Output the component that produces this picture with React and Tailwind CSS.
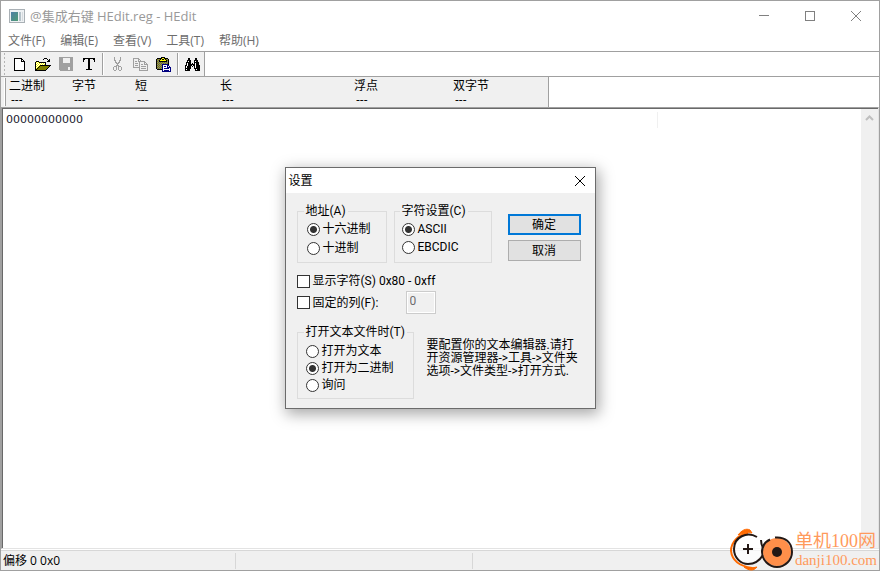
import { useState } from "react";

const COLORS = {
  "#": "#000000",
  G: "#a0a0a0",
  W: "#ffffff",
  Y: "#ffff00",
  O: "#808000",
  g: "#808080",
  B: "#000080",
};

// Toolbar bitmaps, one character per pixel
const ICONS = {
  new: [
    "########...",
    "#WWWWWW##..",
    "#WWWWWW#W#.",
    "#WWWWWW####",
    "#WWWWWWWWW#",
    "#WWWWWWWWW#",
    "#WWWWWWWWW#",
    "#WWWWWWWWW#",
    "#WWWWWWWWW#",
    "#WWWWWWWWW#",
    "#WWWWWWWWW#",
    "#WWWWWWWWW#",
    "###########",
  ],
  open: [
    ".........###....",
    "........#...#.#.",
    ".............##.",
    ".###........###.",
    "#YWY#######.....",
    "#WYWYWYWYW#.....",
    "#YWYWYWYWY#.....",
    "#WYWY###########",
    "#YWY#OOOOOOOOO#.",
    "#WY#OOOOOOOOO#..",
    "#Y#OOOOOOOOO#...",
    "##OOOOOOOOO#....",
    "###########.....",
  ],
  save: [
    "GGGGGGGGGGGGGG",
    "GGGG.......GGG",
    "GGGG.......GGG",
    "GGGG.......GGG",
    "GGGG.......GGG",
    "GGGG.......GGG",
    "GGGGGGGGGGGGGG",
    "GGGGGGGGGGGGGG",
    "GGGGGGGGGGGGGG",
    "GGGGGGGGGGGGGG",
    "GGGGGGGGG..GGG",
    "GGGGGGGGG..GGG",
    "GGGGGGGGG..GGG",
    ".GGGGGGGGGGGGG",
  ],
  text: [
    "############",
    "##...##...##",
    "#....##....#",
    "#....##....#",
    ".....##.....",
    ".....##.....",
    ".....##.....",
    ".....##.....",
    ".....##.....",
    ".....##.....",
    ".....##.....",
    "...######...",
  ],
  cut: [
    "..G.....G..",
    "..G.....G..",
    "..G.....G..",
    "..GG...GG..",
    "...G...G...",
    "...GG.GG...",
    "....GGG....",
    ".....G.....",
    "....GGG....",
    "..GGG.GGG..",
    ".G..G.G..G.",
    ".G..G.G..G.",
    ".G..G.G..G.",
    "..GG...GG..",
  ],
  copy: [
    "GGGGGG.........",
    "G....GG........",
    "G....G.G.......",
    "G.GG.GGGGGGG...",
    "G.....G....GG..",
    "G.GGG.G....G.G.",
    "G.....G.GG.GGGG",
    "G.GGG.G.......G",
    "G.....G.GGGGG.G",
    "GGGGGGG.......G",
    "......G.GGGGG.G",
    "......G.......G",
    "......GGGGGGGGG",
  ],
  paste: [
    ".....####......",
    ".#####YY####...",
    "#OgO#Y##Y#Og#..",
    "#gO#YYYYYY#O#..",
    "#Og########g#..",
    "#gOgOgOgOgOg#..",
    "#OgOgOgOgOgO#..",
    "#gOgOgBBBBBB#..",
    "#OgOgOBWWWWBB..",
    "#gOgOgBWBBWBWB.",
    "#OgOgOBWWWWBBBB",
    "#gOgOgBWBBBBBWB",
    ".#####BWWWWWWWB",
    "......BWBBBBBWB",
    "......BBBBBBBBB",
  ],
  find: [
    "...##.....##...",
    "...##.....##...",
    "..####...####..",
    "..#W##...#W##..",
    ".#####...#####.",
    ".#W###.#.#W###.",
    ".#W#######W###.",
    "##W####.##W####",
    "#W####.#.#W####",
    "#W####...#W####",
    "######...######",
    "#W###.....#W###",
    "#####.....#####",
  ],
};

const MENUS = ["文件(F)", "编辑(E)", "查看(V)", "工具(T)", "帮助(H)"];

const VALUES = [
  { label: "二进制", width: "w-[63px]" },
  { label: "字节", width: "w-[63px]" },
  { label: "短", width: "w-[85px]" },
  { label: "长", width: "w-[134px]" },
  { label: "浮点", width: "w-[99px]" },
  { label: "双字节", width: "w-[95px]" },
];

function PixelIcon({ rows }) {
  const w = rows[0].length;
  const h = rows.length;
  return (
    <svg width={w} height={h} viewBox={`0 0 ${w} ${h}`} shapeRendering="crispEdges" aria-hidden="true">
      {rows.flatMap((row, y) =>
        [...row].map((c, x) =>
          COLORS[c] ? <rect key={`${x}-${y}`} x={x} y={y} width="1" height="1" fill={COLORS[c]} /> : null
        )
      )}
    </svg>
  );
}

function ToolButton({ icon, label, disabled }) {
  return (
    <button type="button" aria-label={label} disabled={disabled} className="flex h-6 w-[23px] items-center justify-center">
      <PixelIcon rows={ICONS[icon]} />
    </button>
  );
}

function Separator() {
  return <span className="mx-[2px] my-px w-[2px] border-l border-[#a0a0a0] bg-white" />;
}

function TitleBar() {
  return (
    <header className="flex h-[29px] items-center justify-between pl-2">
      <div className="flex items-center gap-[5px]">
        <svg width="16" height="14" viewBox="0 0 16 14" aria-hidden="true">
          <defs>
            <linearGradient id="pane" x1="0" y1="0" x2="1" y2="1">
              <stop offset="0" stopColor="#4f7fa6" />
              <stop offset="1" stopColor="#4f9c74" />
            </linearGradient>
          </defs>
          <rect x="0.5" y="0.5" width="15" height="13" fill="#eef1f3" stroke="#a9b0b5" />
          <rect x="2" y="3" width="7" height="9" fill="url(#pane)" />
          <rect x="10" y="3" width="2" height="9" fill="#b5c2c9" />
          <rect x="13" y="3" width="1" height="9" fill="#d5dade" />
        </svg>
        <h1 className="text-[13px] leading-4 text-[#999999]">@集成右键 HEdit.reg - HEdit</h1>
      </div>
      <div className="flex text-[#808080]">
        <button type="button" aria-label="最小化" className="flex h-7 w-[46px] items-center justify-center">
          <svg width="10" height="10" viewBox="0 0 10 10" stroke="currentColor" shapeRendering="crispEdges">
            <path d="M0 4.500h10" />
          </svg>
        </button>
        <button type="button" aria-label="最大化" className="flex h-7 w-[46px] items-center justify-center">
          <svg width="10" height="10" viewBox="0 0 10 10" fill="none" stroke="currentColor">
            <rect x="0.5" y="0.5" width="9" height="9" />
          </svg>
        </button>
        <button type="button" aria-label="关闭" className="flex h-7 w-[46px] items-center justify-center">
          <svg width="10" height="10" viewBox="0 0 10 10" stroke="currentColor">
            <path d="M0 0l10 10M10 0L0 10" />
          </svg>
        </button>
      </div>
    </header>
  );
}

function Radio({ name, label, checked, onChange }) {
  return (
    <label className="flex items-center gap-[3px]">
      <input
        type="radio"
        name={name}
        checked={checked}
        onChange={onChange}
        className="size-[13px] shrink-0 appearance-none rounded-full border border-[#333333] bg-white checked:bg-[radial-gradient(circle,#333333_3px,#ffffff_4px)]"
      />
      {label}
    </label>
  );
}

function Checkbox({ label, checked, onChange }) {
  return (
    <label className="flex items-center gap-[3px]">
      <input
        type="checkbox"
        checked={checked}
        onChange={onChange}
        className="size-[13px] shrink-0 appearance-none border border-[#333333] bg-white checked:bg-[#333333]"
      />
      {label}
    </label>
  );
}

function SettingsDialog() {
  const [address, setAddress] = useState("hex");
  const [charset, setCharset] = useState("ascii");
  const [openAs, setOpenAs] = useState("binary");
  const [showChars, setShowChars] = useState(false);
  const [fixedCols, setFixedCols] = useState(false);

  return (
    <section
      role="dialog"
      aria-label="设置"
      className="w-[311px] border border-[#6b6b6b] bg-[#f0f0f0] font-['Roboto','Noto_Sans_CJK_SC',sans-serif] text-xs leading-4 text-black shadow-[2px_4px_14px_1px_rgba(0,0,0,0.35)]"
    >
      <div className="flex h-[25px] items-center justify-between bg-white pr-[10px] pl-[3px]">
        <h2>设置</h2>
        <button type="button" aria-label="关闭设置">
          <svg width="10" height="10" viewBox="0 0 10 10" stroke="#000000">
            <path d="M0 0l10 10M10 0L0 10" />
          </svg>
        </button>
      </div>

      <form className="px-[11px] pt-[10px] pb-[9px]" onSubmit={(e) => e.preventDefault()}>
        <div className="flex">
          <fieldset className="w-[90px] border border-[#dcdcdc] pb-[6px] pl-[9px]">
            <legend className="-ml-[3px] px-[2px]">地址(A)</legend>
            <div className="flex flex-col gap-[3px] pt-[2px]">
              <Radio name="address" label="十六进制" checked={address === "hex"} onChange={() => setAddress("hex")} />
              <Radio name="address" label="十进制" checked={address === "dec"} onChange={() => setAddress("dec")} />
            </div>
          </fieldset>
          <fieldset className="ml-[7px] w-[98px] border border-[#dcdcdc] pb-[6px] pl-[7px]">
            <legend className="-ml-[2px] px-[2px]">字符设置(C)</legend>
            <div className="flex flex-col gap-[2px] pt-[2px]">
              <Radio name="charset" label="ASCII" checked={charset === "ascii"} onChange={() => setCharset("ascii")} />
              <Radio name="charset" label="EBCDIC" checked={charset === "ebcdic"} onChange={() => setCharset("ebcdic")} />
            </div>
          </fieldset>
          <div className="ml-4 flex w-[73px] flex-col gap-[5px] pt-[11px]">
            <button type="submit" className="h-[21px] border-2 border-[#0078d7] bg-[#e1e1e1]">
              确定
            </button>
            <button type="button" className="h-[21px] border border-[#adadad] bg-[#e1e1e1]">
              取消
            </button>
          </div>
        </div>

        <div className="mt-[10px]">
          <Checkbox label="显示字符(S) 0x80 - 0xff" checked={showChars} onChange={(e) => setShowChars(e.target.checked)} />
        </div>
        <div className="mt-[2px] flex h-[23px] items-center">
          <div className="w-[109px]">
            <Checkbox label="固定的列(F):" checked={fixedCols} onChange={(e) => setFixedCols(e.target.checked)} />
          </div>
          <input
            type="text"
            aria-label="列数"
            defaultValue="0"
            disabled={!fixedCols}
            className="h-[23px] w-[30px] border border-[#cccccc] bg-[#f0f0f0] px-[3px] pb-[3px] text-[#6d6d6d] inset-ring inset-ring-white"
          />
        </div>

        <div className="mt-[10px] flex">
          <fieldset className="w-[117px] border border-[#dcdcdc] pb-[5px] pl-2">
            <legend className="-ml-[2px] px-[2px]">打开文本文件时(T)</legend>
            <div className="flex flex-col gap-px pt-[3px]">
              <Radio name="openAs" label="打开为文本" checked={openAs === "text"} onChange={() => setOpenAs("text")} />
              <Radio name="openAs" label="打开为二进制" checked={openAs === "binary"} onChange={() => setOpenAs("binary")} />
              <Radio name="openAs" label="询问" checked={openAs === "ask"} onChange={() => setOpenAs("ask")} />
            </div>
          </fieldset>
          <p className="ml-[13px] pt-[15px] leading-[13px] whitespace-nowrap">
            要配置你的文本编辑器.请打
            <br />
            开资源管理器-&gt;工具-&gt;文件夹
            <br />
            选项-&gt;文件类型-&gt;打开方式.
          </p>
        </div>
      </form>
    </section>
  );
}

function Watermark() {
  return (
    <div className="absolute right-[2px] -bottom-px flex items-center gap-[1px]">
      <svg width="64" height="43" viewBox="0 0 64 43" fill="none" aria-hidden="true">
        <path d="M18 5C8 7 1 14 1 23c1 9 8 15 21 17" stroke="#ff6a00" strokeWidth="2" />
        <path d="M8 7C12 2 16 0 20 2l2 3c-5-1-9 0-14 2zM14 39c5 4 10 4 13 0-4 1-8 1-13 0z" fill="#ff6a00" stroke="#ff6a00" />
        <circle cx="18" cy="21" r="14" fill="#ffffff" fillOpacity="0.7" />
        <path d="M27 9C17 3 4 9 4 21c0 9 7 15 14 15 7 0 12-4 15-9" stroke="#231815" strokeWidth="2" />
        <path d="M31 12c0 4 1 6 2 8" stroke="#231815" strokeWidth="2" />
        <path d="M18 16v10M13 21h10" stroke="#231815" strokeWidth="2" />
        <circle cx="47" cy="24" r="14" fill="#ff8f4a" />
        <path d="M45 9.500c10-1 17 5 17 14.500 0 8-7 15-15 15s-15-7-15-15c0-6 3-10 8-12.500" stroke="#231815" strokeWidth="2" />
        <circle cx="47" cy="24" r="5" fill="#231815" />
      </svg>
      <div className="font-['Liberation_Serif','Noto_Sans_CJK_SC',serif] text-[#ff9a5c]">
        <p className="text-[18px] leading-5">单机100网</p>
        <p className="text-[15px] leading-[18px]">danji100.com</p>
      </div>
    </div>
  );
}

export default function App() {
  return (
    <div className="relative flex h-screen flex-col border border-[#a0a0a0] bg-white font-['Open_Sans','Noto_Sans_CJK_SC',sans-serif] text-xs leading-4 text-black">
      <TitleBar />

      <nav className="flex h-[22px] items-center gap-[15px] border-b border-[#a0a0a0] pt-px pl-[7px] text-[#6d6d6d]">
        {MENUS.map((menu) => (
          <button key={menu} type="button">
            {menu}
          </button>
        ))}
      </nav>

      <div className="flex h-[25px] border-b border-[#a0a0a0]">
        <div className="flex border-r border-[#a0a0a0] bg-[#f0f0f0] pl-[2px]">
          <span className="mr-[2px] w-[3px] bg-[radial-gradient(circle,#b4b4b4_1px,transparent_1px)] bg-[size:3px_4px]" />
          <ToolButton icon="new" label="新建" />
          <ToolButton icon="open" label="打开" />
          <ToolButton icon="save" label="保存" disabled />
          <ToolButton icon="text" label="文本" />
          <Separator />
          <ToolButton icon="cut" label="剪切" disabled />
          <ToolButton icon="copy" label="复制" disabled />
          <ToolButton icon="paste" label="粘贴" />
          <Separator />
          <ToolButton icon="find" label="查找" />
        </div>
      </div>

      <div className="flex h-[30px]">
        <dl className="flex border-r border-[#a0a0a0] bg-[#f0f0f0] pt-px pl-[3px]">
          <div className="mr-[3px] mb-px w-[2px] border-r border-[#a0a0a0] bg-white" />
          {VALUES.map(({ label, width }) => (
            <div key={label} className={width}>
              <dt>{label}</dt>
              <dd className="pl-[2px] leading-3">---</dd>
            </div>
          ))}
        </dl>
      </div>

      <main className="flex min-h-0 flex-1 border border-t-[#a0a0a0] border-r-[#e3e3e3] border-b-[#e3e3e3] border-l-[#a0a0a0]">
        <div className="flex flex-1 border-t border-l border-[#696969]">
          <div className="flex-1 pt-[3px] pl-[3px]">
            <div className="flex h-4 items-center">
              <span className="w-[652px] border-r border-[#f0f0f0] font-['DejaVu_Sans',sans-serif] text-[11px] text-[#1a1a2e]">
                00000000000
              </span>
            </div>
          </div>
          <div className="flex w-[17px] justify-center bg-[#f0f0f0] pt-[6px] pr-px">
            <svg width="9" height="6" viewBox="0 0 9 6" fill="none" stroke="#bfbfbf" strokeWidth="2" aria-hidden="true">
              <path d="M1 5l3.500-3.500L8 5" />
            </svg>
          </div>
        </div>
      </main>

      <footer className="mt-px flex h-5 items-center border-t border-[#d7d7d7] bg-[#f0f0f0] pt-px">
        <div className="w-[235px] border-r border-[#d7d7d7] pl-[2px]">偏移 0 0x0</div>
        <div className="h-4 w-[237px] border-r border-[#d7d7d7]" />
      </footer>

      <div className="absolute inset-0 flex items-center justify-center pt-[5px]">
        <SettingsDialog />
      </div>
      <Watermark />
    </div>
  );
}
